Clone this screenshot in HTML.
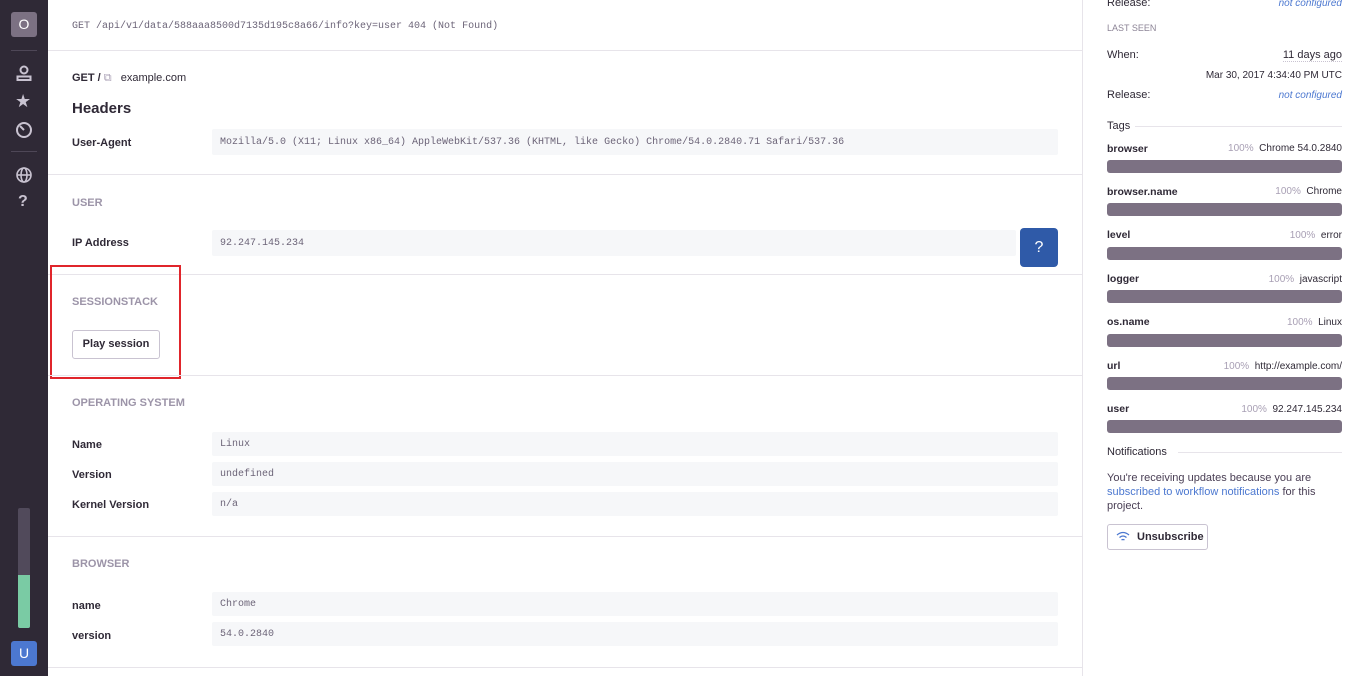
<!DOCTYPE html>
<html><head><meta charset="utf-8"><style>
*{margin:0;padding:0;box-sizing:border-box}
body{width:1366px;height:676px;overflow:hidden;background:#fff;font-family:"Liberation Sans",sans-serif;color:#2f2936;position:relative}
.a{position:absolute;white-space:nowrap}
.sb{left:0;top:0;width:48px;height:676px;background:#2f2936}
.mono{font-family:"Liberation Mono",monospace;font-size:10px;color:#6c6478}
.hr{position:absolute;left:48px;width:1034px;height:1px;background:#e7e4ea}
.lbl{font-size:11px;font-weight:bold;color:#2f2936}
.sec{font-size:11px;font-weight:bold;color:#9c94a8}
.box{position:absolute;background:#f6f7f9;border-radius:2px;padding:0 8px;font-family:"Liberation Mono",monospace;font-size:10px;color:#6c6478;display:flex;align-items:center}
.r{font-size:11px}
.bar{position:absolute;left:1107px;width:235px;height:13px;background:#7c7183;border-radius:3px}
.pct{color:#a89fb4}
</style></head><body>
<div class="a sb"></div>
<div class="a" style="left:11px;top:12px;width:26px;height:25px;background:#7c7183;border-radius:3px;color:#fff;font-size:14px;text-align:center;line-height:25px">O</div>
<div class="a" style="left:11px;top:50px;width:26px;height:1px;background:#4e4757"></div>
<svg class="a" style="left:15px;top:65px" width="18" height="16" viewBox="0 0 18 16"><circle cx="9" cy="5" r="3.5" fill="none" stroke="#c9c3d1" stroke-width="2"/><path d="M2.5 15 V11.5 H15.5 V15 Z" fill="none" stroke="#c9c3d1" stroke-width="2"/></svg>
<div class="a" style="left:15px;top:91px;color:#c9c3d1;font-size:18px">★</div>
<svg class="a" style="left:15px;top:121px" width="18" height="18" viewBox="0 0 18 18"><circle cx="9" cy="9" r="7" fill="none" stroke="#c9c3d1" stroke-width="2"/><path d="M9 9 L5 5" stroke="#c9c3d1" stroke-width="2"/></svg>
<div class="a" style="left:11px;top:151px;width:26px;height:1px;background:#4e4757"></div>
<svg class="a" style="left:15px;top:166px" width="18" height="18" viewBox="0 0 18 18" fill="none" stroke="#c9c3d1" stroke-width="1.6"><circle cx="9" cy="9" r="7"/><ellipse cx="9" cy="9" rx="3" ry="7"/><path d="M2 9H16"/></svg>
<div class="a" style="left:18px;top:193px;color:#c9c3d1;font-size:16px;font-weight:bold">?</div>
<div class="a" style="left:18px;top:508px;width:12px;height:120px;background:#514a5b;border-radius:2px"></div>
<div class="a" style="left:18px;top:575px;width:12px;height:53px;background:#7acba4;border-radius:0 0 2px 2px"></div>
<div class="a" style="left:11px;top:641px;width:26px;height:25px;background:#4c78d0;border-radius:3px;color:#fff;font-size:14px;text-align:center;line-height:25px">U</div>

<div class="a" style="left:1082px;top:0;width:1px;height:676px;background:#e7e4ea"></div>

<div class="a mono" style="left:72px;top:21px">GET /api/v1/data/588aaa8500d7135d195c8a66/info?key=user 404 (Not Found)</div>
<div class="hr" style="top:50px"></div>
<div class="a lbl" style="left:72px;top:72px">GET / <span style="color:#a89fb4;font-weight:normal">⧉</span> <span style="font-weight:normal;margin-left:6px">example.com</span></div>
<div class="a" style="left:72px;top:100px;font-size:15px;font-weight:bold">Headers</div>
<div class="a lbl" style="left:72px;top:137px">User-Agent</div>
<div class="box" style="left:212px;top:129px;width:846px;height:26px">Mozilla/5.0 (X11; Linux x86_64) AppleWebKit/537.36 (KHTML, like Gecko) Chrome/54.0.2840.71 Safari/537.36</div>
<div class="hr" style="top:174px"></div>
<div class="a sec" style="left:72px;top:197px">USER</div>
<div class="a lbl" style="left:72px;top:237px">IP Address</div>
<div class="box" style="left:212px;top:230px;width:804px;height:26px">92.247.145.234</div>
<div class="a" style="left:1020px;top:228px;width:38px;height:39px;background:#2f5aa8;border-radius:4px;color:#fff;font-size:16px;text-align:center;line-height:39px">?</div>
<div class="hr" style="top:274px"></div>
<div class="a sec" style="left:72px;top:296px">SESSIONSTACK</div>
<div class="a" style="left:72px;top:330px;width:88px;height:29px;border:1px solid #c9c3d1;border-radius:3px;font-size:11px;font-weight:bold;text-align:center;line-height:27px">Play session</div>
<div class="a" style="left:50px;top:265px;width:131px;height:114px;border:2px solid #e0252b"></div>
<div class="hr" style="top:375px"></div>
<div class="a sec" style="left:72px;top:397px">OPERATING SYSTEM</div>
<div class="a lbl" style="left:72px;top:439px">Name</div><div class="box" style="left:212px;top:432px;width:846px;height:24px">Linux</div>
<div class="a lbl" style="left:72px;top:469px">Version</div><div class="box" style="left:212px;top:462px;width:846px;height:24px">undefined</div>
<div class="a lbl" style="left:72px;top:499px">Kernel Version</div><div class="box" style="left:212px;top:492px;width:846px;height:24px">n/a</div>
<div class="hr" style="top:536px"></div>
<div class="a sec" style="left:72px;top:558px">BROWSER</div>
<div class="a lbl" style="left:72px;top:600px">name</div><div class="box" style="left:212px;top:592px;width:846px;height:24px">Chrome</div>
<div class="a lbl" style="left:72px;top:630px">version</div><div class="box" style="left:212px;top:622px;width:846px;height:24px">54.0.2840</div>
<div class="hr" style="top:667px"></div>

<div class="a r" style="left:1107px;top:-3px">Release:</div>
<div class="a" style="right:24px;top:-2px;font-size:10px;font-style:italic;color:#4c78d0">not configured</div>
<div class="a" style="left:1107px;top:23px;font-size:9px;color:#8c8496">LAST SEEN</div>
<div class="a r" style="left:1107px;top:49px">When:</div>
<div class="a r" style="right:24px;top:49px;border-bottom:1px dotted #c9c3d1">11 days ago</div>
<div class="a" style="right:24px;top:70px;font-size:10px">Mar 30, 2017 4:34:40 PM UTC</div>
<div class="a r" style="left:1107px;top:89px">Release:</div>
<div class="a" style="right:24px;top:90px;font-size:10px;font-style:italic;color:#4c78d0">not configured</div>
<div class="a r" style="left:1107px;top:120px">Tags</div>
<div class="a" style="left:1135px;top:126px;width:207px;height:1px;background:#e7e4ea"></div>

<div class="a r" style="left:1107px;top:143px;font-weight:bold;font-size:10.5px">browser</div><div class="a" style="right:24px;top:143px;font-size:10px"><span class="pct">100%</span>&nbsp; Chrome 54.0.2840</div><div class="bar" style="top:160px"></div>
<div class="a r" style="left:1107px;top:186px;font-weight:bold;font-size:10.5px">browser.name</div><div class="a" style="right:24px;top:186px;font-size:10px"><span class="pct">100%</span>&nbsp; Chrome</div><div class="bar" style="top:203px"></div>
<div class="a r" style="left:1107px;top:229px;font-weight:bold;font-size:10.5px">level</div><div class="a" style="right:24px;top:230px;font-size:10px"><span class="pct">100%</span>&nbsp; error</div><div class="bar" style="top:247px"></div>
<div class="a r" style="left:1107px;top:273px;font-weight:bold;font-size:10.5px">logger</div><div class="a" style="right:24px;top:274px;font-size:10px"><span class="pct">100%</span>&nbsp; javascript</div><div class="bar" style="top:290px"></div>
<div class="a r" style="left:1107px;top:316px;font-weight:bold;font-size:10.5px">os.name</div><div class="a" style="right:24px;top:317px;font-size:10px"><span class="pct">100%</span>&nbsp; Linux</div><div class="bar" style="top:334px"></div>
<div class="a r" style="left:1107px;top:360px;font-weight:bold;font-size:10.5px">url</div><div class="a" style="right:24px;top:361px;font-size:10px"><span class="pct">100%</span>&nbsp; http://example.com/</div><div class="bar" style="top:377px"></div>
<div class="a r" style="left:1107px;top:403px;font-weight:bold;font-size:10.5px">user</div><div class="a" style="right:24px;top:404px;font-size:10px"><span class="pct">100%</span>&nbsp; 92.247.145.234</div><div class="bar" style="top:420px"></div>

<div class="a r" style="left:1107px;top:446px">Notifications</div>
<div class="a" style="left:1178px;top:452px;width:164px;height:1px;background:#e7e4ea"></div>
<div class="a" style="left:1107px;top:471px;font-size:11px;line-height:14px;color:#493e54;white-space:normal;width:240px">You're receiving updates because you are <span style="color:#4c78d0">subscribed to workflow notifications</span> for this project.</div>
<div class="a" style="left:1107px;top:524px;width:101px;height:26px;border:1px solid #c9c3d1;border-radius:3px;font-size:11px;font-weight:bold;line-height:24px;padding-left:29px">Unsubscribe</div>
<svg class="a" style="left:1116px;top:531px" width="14" height="11" viewBox="0 0 14 11" fill="none" stroke="#4c78d0" stroke-width="1.3"><path d="M1 4 Q7 -1 13 4"/><path d="M3.5 6.5 Q7 3.5 10.5 6.5"/><path d="M5.5 9 Q7 8 8.5 9"/></svg>
</body></html>
